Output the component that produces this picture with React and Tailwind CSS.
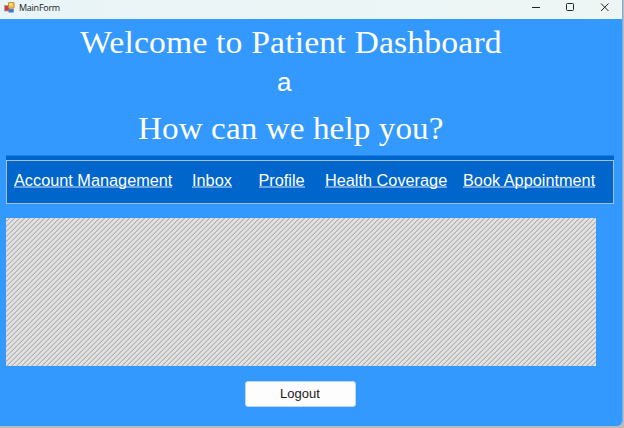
const links = [
  ["Account Management", "w-[178px]"],
  ["Inbox", "w-[66.5px]"],
  ["Profile", "w-[66.5px]"],
  ["Health Coverage", "w-[138px]"],
  ["Book Appointment", "w-[136px]"],
];

function FormIcon() {
  return (
    <svg width="11" height="11" viewBox="0 0 11 11" className="block">
      <rect x="0.5" y="3.5" width="5" height="5.5" fill="#c8403c" stroke="#a8a0a0" strokeWidth="0.8" />
      <rect x="4.8" y="7" width="4.8" height="3.2" fill="#3d6fd0" stroke="#7291c8" strokeWidth="0.7" />
      <rect x="4.5" y="0.5" width="5.6" height="5.6" rx="0.5" fill="#fbc545" stroke="#b98a2b" strokeWidth="0.9" />
      <rect x="5.5" y="1.5" width="2.5" height="1.5" fill="#ffe38c" />
    </svg>
  );
}

export default function App() {
  return (
    <div className="h-[428px] w-[624px] overflow-hidden bg-[#b9bbbf] font-['Liberation_Sans',Arial,sans-serif]">
      <div className="flex h-[426px] w-[623px] flex-col overflow-hidden rounded-br-[6px] border-r border-[#79aee6] bg-[#3399ff]">
        <header className="flex h-[19px] shrink-0 items-start bg-gradient-to-r from-[#e9f4f8] to-[#eef6f4] pl-1">
          <div className="pt-[2px]"><FormIcon /></div>
          <span className="ml-[4px] mt-[1px] font-['Open_Sans',sans-serif] text-[9px] leading-[13px] tracking-[-0.25px] text-[#1a1a1a]">MainForm</span>
          <svg width="90" height="14" viewBox="0 0 90 14" className="ml-auto mr-[4px]" fill="none" stroke="#222" strokeWidth="1">
            <path d="M4 7.5h8" />
            <rect x="38.5" y="3.5" width="7" height="7" rx="1" />
            <path d="M73 3.5l7.5 7.5M80.5 3.5L73 11" />
          </svg>
        </header>
        <h1 className="ml-[80px] mt-[4px] h-[38px] origin-left scale-x-[1.053] whitespace-nowrap font-['Liberation_Serif',serif] text-[32px] leading-[38px] tracking-[0.15px] text-white">Welcome to Patient Dashboard</h1>
        <p className="ml-[277px] mt-[6px] h-[30px] text-[26px] leading-[30px] text-white">a</p>
        <h2 className="ml-[138px] mt-[12px] h-[38px] origin-left scale-x-[1.035] whitespace-nowrap font-['Liberation_Serif',serif] text-[32px] leading-[38px] tracking-[0.1px] text-white">How can we help you?</h2>
        <div className="ml-[6px] mt-[8px] h-[5px] w-[608px] shrink-0 border-t border-[#1a80e6] bg-[#0066cc]" />
        <nav className="ml-[6px] flex h-[44px] w-[608px] shrink-0 border border-[#a3bfdc] bg-[#0066cc] pl-[7px] pt-[8px]">
          {links.map(([label, width]) => (
            <div key={label} className={`${width} shrink-0`}>
              <a className="inline-block h-[18px] whitespace-nowrap border-b-2 border-[#66a3e0] text-[16.3px] leading-[20px] text-white">{label}</a>
            </div>
          ))}
        </nav>
        <main className="ml-[6px] mt-[14px] h-[148px] w-[590px] shrink-0 bg-[repeating-linear-gradient(135deg,#e1e1e1_0px,#e1e1e1_1.9px,#b2b2b2_2.4px,#b2b2b2_3px,#e1e1e1_3.5355px)]" />
        <button className="ml-[245px] mt-[15px] h-[26px] w-[111px] shrink-0 rounded-[3px] border border-[#bfd8f1] bg-[#fdfdfd] pr-[1px] text-[13px] leading-[24px] text-[#1a1a1a]">Logout</button>
      </div>
    </div>
  );
}
